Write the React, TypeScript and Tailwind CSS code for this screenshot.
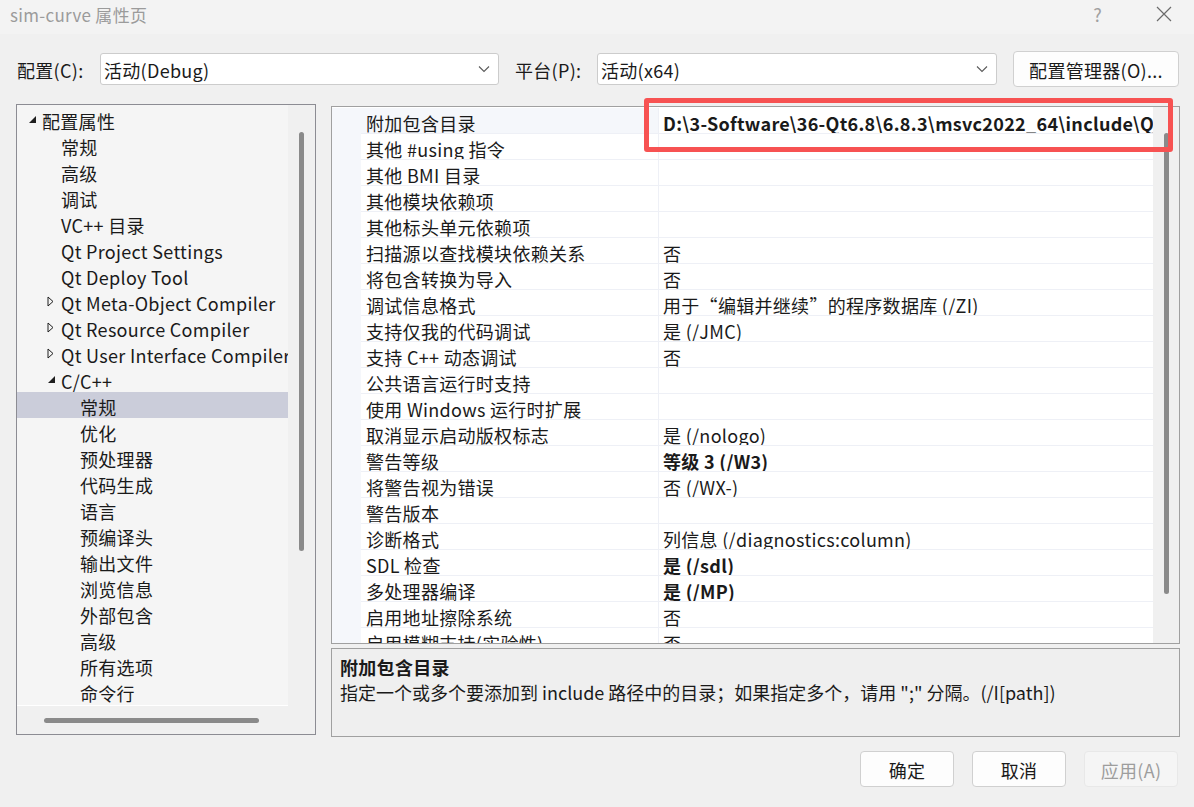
import React from "react";

const FONT = { fontFamily: '"Noto Sans CJK SC", "Noto Sans", sans-serif' };

type TreeItem = { label: string; level: number; arrow?: "open" | "closed"; selected?: boolean };

const tree: TreeItem[] = [
  { label: "配置属性", level: 0, arrow: "open" },
  { label: "常规", level: 1 },
  { label: "高级", level: 1 },
  { label: "调试", level: 1 },
  { label: "VC++ 目录", level: 1 },
  { label: "Qt Project Settings", level: 1 },
  { label: "Qt Deploy Tool", level: 1 },
  { label: "Qt Meta-Object Compiler", level: 1, arrow: "closed" },
  { label: "Qt Resource Compiler", level: 1, arrow: "closed" },
  { label: "Qt User Interface Compiler", level: 1, arrow: "closed" },
  { label: "C/C++", level: 1, arrow: "open" },
  { label: "常规", level: 2, selected: true },
  { label: "优化", level: 2 },
  { label: "预处理器", level: 2 },
  { label: "代码生成", level: 2 },
  { label: "语言", level: 2 },
  { label: "预编译头", level: 2 },
  { label: "输出文件", level: 2 },
  { label: "浏览信息", level: 2 },
  { label: "外部包含", level: 2 },
  { label: "高级", level: 2 },
  { label: "所有选项", level: 2 },
  { label: "命令行", level: 2 },
];

type Prop = { name: string; value: string; bold?: boolean };

const props: Prop[] = [
  { name: "附加包含目录", value: "D:\\3-Software\\36-Qt6.8\\6.8.3\\msvc2022_64\\include\\QtWidgets;D:\\3-Software", bold: true },
  { name: "其他 #using 指令", value: "" },
  { name: "其他 BMI 目录", value: "" },
  { name: "其他模块依赖项", value: "" },
  { name: "其他标头单元依赖项", value: "" },
  { name: "扫描源以查找模块依赖关系", value: "否" },
  { name: "将包含转换为导入", value: "否" },
  { name: "调试信息格式", value: "用于“编辑并继续”的程序数据库 (/ZI)" },
  { name: "支持仅我的代码调试", value: "是 (/JMC)" },
  { name: "支持 C++ 动态调试", value: "否" },
  { name: "公共语言运行时支持", value: "" },
  { name: "使用 Windows 运行时扩展", value: "" },
  { name: "取消显示启动版权标志", value: "是 (/nologo)" },
  { name: "警告等级", value: "等级 3 (/W3)", bold: true },
  { name: "将警告视为错误", value: "否 (/WX-)" },
  { name: "警告版本", value: "" },
  { name: "诊断格式", value: "列信息 (/diagnostics:column)" },
  { name: "SDL 检查", value: "是 (/sdl)", bold: true },
  { name: "多处理器编译", value: "是 (/MP)", bold: true },
  { name: "启用地址擦除系统", value: "否" },
  { name: "启用模糊支持(实验性)", value: "否" },
];

function Chevron() {
  return (
    <svg width="12" height="8" viewBox="0 0 12 8" className="shrink-0">
      <path d="M1 1.5 L6 6.5 L11 1.5" fill="none" stroke="#5a5a5a" strokeWidth="1.1" />
    </svg>
  );
}

function OpenArrow() {
  return (
    <svg width="9" height="9" viewBox="0 0 9 9">
      <path d="M8 1 L8 8 L1 8 Z" fill="#1e1e1e" />
    </svg>
  );
}

function ClosedArrow() {
  return (
    <svg width="7" height="11" viewBox="0 0 7 11">
      <path d="M1 1 L6 5.5 L1 10 Z" fill="none" stroke="#1e1e1e" strokeWidth="1" />
    </svg>
  );
}

function Combo({ text, width }: { text: string; width: string }) {
  return (
    <div className={`${width} h-[32px] bg-white border border-[#cccccc] rounded-[3px] flex items-center pl-[3px] pr-[8px] justify-between`}>
      <span className="text-[18px] text-[#1a1a1a] leading-none pt-[2px]">{text}</span>
      <Chevron />
    </div>
  );
}

export default function App() {
  return (
    <div className="w-[1194px] h-[807px] bg-[#f0f0f0] relative overflow-hidden text-[#1a1a1a] tracking-[0.3px]" style={FONT}>
      {/* Title bar */}
      <div className="h-[34px] bg-[#f3f3f3] flex items-center justify-between pl-[10px] pr-[22px]">
        <span className="text-[17px] text-[#9b9b9b] leading-none -mt-[5px]">sim-curve 属性页</span>
        <div className="flex items-center gap-[54px] -mt-[6px]">
          <span className="text-[18px] text-[#a0a0a0] leading-none">?</span>
          <svg width="16" height="16" viewBox="0 0 16 16">
            <path d="M1 1 L15 15 M15 1 L1 15" stroke="#6b6b6b" strokeWidth="1.2" />
          </svg>
        </div>
      </div>

      {/* Config row */}
      <div className="flex items-center h-[36px] mt-[17px] pl-[17px]">
        <span className="text-[18px] leading-none w-[83px] pt-[2px]">配置(C):</span>
        <Combo text="活动(Debug)" width="w-[399px]" />
        <span className="text-[18px] leading-none ml-[16px] w-[82px] pt-[2px]">平台(P):</span>
        <Combo text="活动(x64)" width="w-[400px]" />
        <div className="ml-[16px] w-[166px] h-[36px] bg-[#fdfdfd] border border-[#d0d0d0] rounded-[4px] flex items-center justify-center">
          <span className="text-[18px] leading-none pt-[2px]">配置管理器(O)...</span>
        </div>
      </div>

      {/* Main */}
      <div className="flex mt-[17px] pl-[16px] gap-[15px]">
        {/* Tree */}
        <div className="w-[300px] h-[631px] border border-[#8c8c93] bg-[#f0f0f0] flex flex-col">
          <div className="flex flex-1 min-h-0">
            <div className="w-[271px] h-[601px] bg-[#f5f5f5] pt-[1px] overflow-hidden border-b border-white">
              {tree.map((t, i) => (
                <div
                  key={i}
                  className={`h-[26px] flex items-center whitespace-nowrap ${t.selected ? "bg-[#cbcdda]" : ""}`}
                >
                  <div
                    className={`flex items-center justify-center shrink-0 ${
                      t.level === 0 ? "w-[25px]" : t.level === 1 ? "w-[44px]" : "w-[63px]"
                    }`}
                  >
                    <div className="ml-auto w-[14px] flex justify-start">
                      {t.arrow === "open" ? <OpenArrow /> : t.arrow === "closed" ? <ClosedArrow /> : null}
                    </div>
                  </div>
                  <span className="text-[18px] leading-none pt-[4px]">{t.label}</span>
                </div>
              ))}
            </div>
            <div className="flex-1 flex justify-center pt-[27px]">
              <div className="w-[5px] h-[419px] bg-[#8a8a8a] rounded-full" />
            </div>
          </div>
          <div className="h-[28px] flex items-center pl-[27px] -mt-[1px]">
            <div className="w-[215px] h-[5px] bg-[#8a8a8a] rounded-full" />
          </div>
        </div>

        {/* Right column */}
        <div className="w-[849px] flex flex-col gap-[4px] mt-[2px]">
          <div className="h-[538px] border border-[#a0a0a0] bg-[#f0f0f0] flex">
            <div className="flex-1 bg-white overflow-hidden pt-[1px] flex flex-col">
              {props.map((p, i) => (
                <div key={i} className="h-[26px] shrink-0 flex">
                  <div className="w-[29px] shrink-0 bg-[#f5f7fb]" />
                  <div
                    className={`w-[298px] shrink-0 border-b border-r border-[#eef0f6] flex items-center pl-[5px] pt-[4px] whitespace-nowrap overflow-hidden ${
                      i === 0 ? "bg-[#f5f7fb]" : ""
                    }`}
                  >
                    <span className="text-[18px] leading-none">{p.name}</span>
                  </div>
                  <div className="flex-1 min-w-0 border-b border-[#eef0f6] flex items-center pl-[4px] pt-[4px] whitespace-nowrap overflow-hidden">
                    <span className={`text-[18px] leading-none ${p.bold ? "font-bold" : ""}`}>{p.value}</span>
                  </div>
                </div>
              ))}
            </div>
            <div className="w-[26px] shrink-0 flex justify-center pt-[26px]">
              <div className="w-[5px] h-[461px] bg-[#8a8a8a] rounded-full" />
            </div>
          </div>

          {/* Description */}
          <div className="h-[89px] border border-[#a0a0a0] bg-[#efefef] pl-[8px] pt-[6px]">
            <div className="text-[18px] font-bold leading-[24px]">附加包含目录</div>
            <div className="text-[18px] leading-[26px] whitespace-nowrap tracking-normal">
              指定一个或多个要添加到 include 路径中的目录；如果指定多个，请用 ";" 分隔。(/I[path])
            </div>
          </div>
        </div>
      </div>

      {/* Buttons */}
      <div className="flex justify-end gap-[18px] pr-[16px] mt-[14px]">
        <div className="w-[94px] h-[36px] bg-[#fdfdfd] border border-[#d0d0d0] rounded-[4px] flex items-center justify-center">
          <span className="text-[18px] leading-none pt-[2px]">确定</span>
        </div>
        <div className="w-[94px] h-[36px] bg-[#fdfdfd] border border-[#d0d0d0] rounded-[4px] flex items-center justify-center">
          <span className="text-[18px] leading-none pt-[2px]">取消</span>
        </div>
        <div className="w-[94px] h-[36px] bg-[#f5f5f5] border border-[#e8e8e8] rounded-[4px] flex items-center justify-center">
          <span className="text-[18px] leading-none text-[#9d9d9d] pt-[2px]">应用(A)</span>
        </div>
      </div>

      {/* Red annotation overlay */}
      <div className="absolute left-[644px] top-[98px] w-[529px] h-[54px] border-[5px] border-[#f75252] rounded-[3px] pointer-events-none" />
    </div>
  );
}
